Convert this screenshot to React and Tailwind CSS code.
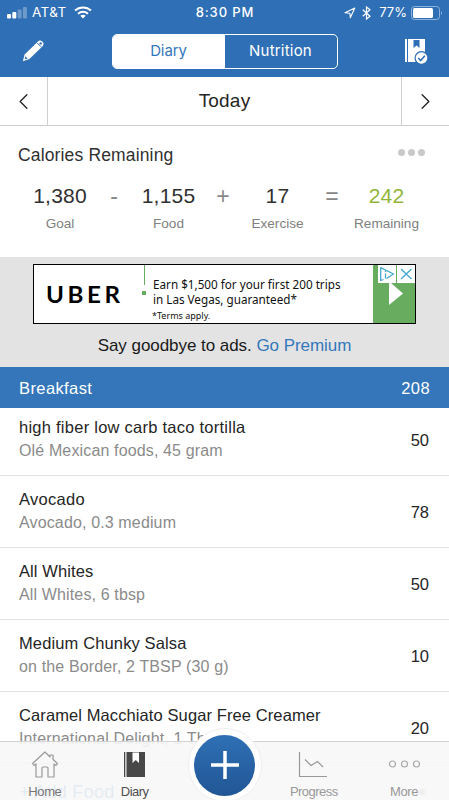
import { ChevronLeft, ChevronRight } from 'lucide-react';

const summary = [
  { value: '1,380', label: 'Goal', width: 'w-[76px]', color: 'text-[#303030]' },
  { sign: '-', width: 'w-[32px]' },
  { value: '1,155', label: 'Food', width: 'w-[77px]', color: 'text-[#303030]' },
  { sign: '+', width: 'w-[32px]' },
  { value: '17', label: 'Exercise', width: 'w-[77px]', color: 'text-[#303030]' },
  { sign: '=', width: 'w-[32px]' },
  { value: '242', label: 'Remaining', width: 'w-[77px]', color: 'text-[#8fb638]' },
];

const foods = [
  { name: 'high fiber low carb taco tortilla', detail: 'Olé Mexican foods, 45 gram', calories: 50, tracking: 'tracking-[0.25px]' },
  { name: 'Avocado', detail: 'Avocado, 0.3 medium', calories: 78, tracking: 'tracking-[0.3px]' },
  { name: 'All Whites', detail: 'All Whites, 6 tbsp', calories: 50, tracking: 'tracking-[0.1px]' },
  { name: 'Medium Chunky Salsa', detail: 'on the Border, 2 TBSP (30 g)', calories: 10, tracking: 'tracking-[0.13px]' },
  { name: 'Caramel Macchiato Sugar Free Creamer', detail: 'International Delight, 1 Tbsp', calories: 20, tracking: 'tracking-[0.1px]' },
];

const StatusBar = () => (
  <div className="flex h-[25px] items-center justify-between pl-[7px] pr-[6px] font-['Inter',sans-serif] text-[13px] leading-none text-white">
    <div className="flex w-[150px] items-center">
      <svg width="20" height="12" viewBox="0 0 20 12" fill="#fff">
        <rect x="0" y="7" width="4" height="4.5" rx="1" />
        <rect x="5.3" y="5" width="4" height="6.5" rx="1" />
        <rect x="10.6" y="2.5" width="4" height="9" rx="1" opacity=".3" />
        <rect x="15.9" y="0" width="4" height="11.5" rx="1" opacity=".3" />
      </svg>
      <span className="ml-[5px] text-[13.5px] tracking-[0.4px]">AT&amp;T</span>
      <svg className="ml-[7px]" width="18" height="13" viewBox="0 0 18 13" fill="none" stroke="#fff" strokeWidth="2">
        <path d="M1 4.6C5.5.4 12.5.4 17 4.6" />
        <path d="M4 7.7C6.8 5.2 11.2 5.2 14 7.7" />
        <path d="M6.3 9.7C7.8 8.3 10.2 8.3 11.7 9.7L9 12.4z" fill="#fff" stroke="none" />
      </svg>
    </div>
    <span className="font-medium tracking-[0.9px]">8:30 PM</span>
    <div className="flex w-[150px] items-center justify-end">
      <svg width="12" height="12" viewBox="0 0 12 12" fill="none" stroke="#fff" strokeWidth="1.1" strokeLinejoin="round">
        <path d="M1 5.8L10.8 1L6.3 10.8L5.9 6.2z" />
      </svg>
      <svg className="ml-[6px]" width="9" height="14" viewBox="0 0 9 14" fill="none" stroke="#fff" strokeWidth="1.2">
        <path d="M.8 3.8L8 10.2L4.5 13V1L8 3.8L.8 10.2" />
      </svg>
      <span className="ml-[8px] text-[13px]">77%</span>
      <svg className="ml-[4px]" width="32" height="14" viewBox="0 0 32 14">
        <rect x=".5" y=".5" width="28" height="13" rx="3" fill="none" stroke="#8fb4dc" />
        <rect x="2" y="2" width="20" height="10" rx="1.5" fill="#fff" />
        <path d="M30 5q2 2 0 4z" fill="#8fb4dc" />
      </svg>
    </div>
  </div>
);

const NavBar = () => (
  <div className="flex h-[52px] items-center justify-between pl-[22px] pr-[20px]">
    <svg className="-mt-[2px]" width="23" height="23" viewBox="0 0 23 23" fill="#fff">
      <path d="M2.6 15.5L16 2.4Q18 .6 20.2 2.6T20.8 7L7.4 20L.9 22.2z" />
      <path d="M15.3 4l3.8 3.8" stroke="#2f6fb5" strokeWidth="1" />
      <circle cx="18.7" cy="4.4" r="1.2" fill="#2f6fb5" />
      <path d="M3.4 17.3l2.2 2.1l-2.8 1z" fill="#2f6fb5" />
    </svg>
    <div className="flex h-[35px] w-[226px] overflow-hidden rounded-[5px] border border-white font-['Inter',sans-serif] text-[15px]">
      <div className="flex flex-1 items-center justify-center bg-white tracking-[-0.1px] text-[#3478bc]">Diary</div>
      <div className="flex flex-1 items-center justify-center tracking-[0.2px] text-white">Nutrition</div>
    </div>
    <svg width="25" height="27" viewBox="0 0 25 27">
      <path d="M1 1h2v23H1zM4 1h17v23H4z" fill="#fff" />
      <path d="M9.5 2h6v8l-3-2.5l-3 2.5z" fill="#2f6fb5" />
      <circle cx="17.5" cy="20" r="7" fill="#2f6fb5" />
      <circle cx="17.5" cy="20" r="5.8" fill="#fff" />
      <path d="M14.3 20l2.3 2.5l4.3-4.7" fill="none" stroke="#2f6fb5" strokeWidth="1.6" />
    </svg>
  </div>
);

const AdBanner = () => (
  <section className="h-[110px] bg-[#e3e3e3] pt-[7px]">
    <div className="mx-auto flex h-[60px] w-[383px] border border-black bg-white">
      <div className="flex w-[110px] items-center pl-[12px] font-['Lato',sans-serif] text-[22px] font-bold text-black">
        <span className="origin-left scale-x-110 tracking-[3.2px]">UBER</span>
      </div>
      <div className="w-[9px]">
        <div className="h-[20px] border-l border-[#68ac60]" />
        <div className="-ml-[2px] mt-[6px] size-[4px] bg-[#68ac60]" />
      </div>
      <div className="flex-1 whitespace-nowrap pt-[12px] font-['Noto_Sans',sans-serif] text-[11.7px] leading-[14.5px] text-[#111]">
        <p>Earn $1,500 for your first 200 trips</p>
        <p>in Las Vegas, guaranteed*</p>
        <p className="-ml-[1px] mt-[3px] text-[9px]">*Terms apply.</p>
      </div>
      <div className="w-[42px] bg-[#68ac60]">
        <div className="ml-[5px] flex gap-px">
          <svg className="bg-white" width="18" height="18" viewBox="0 0 18 18" fill="none" stroke="#45a9cf" strokeWidth="1.3" strokeLinejoin="round">
            <path d="M5.5 14.5L2.7 15.5V2.7L15.5 9L8.5 13.5" />
            <path d="M7.5 5.8v1.3M7.5 8.5v5" />
          </svg>
          <svg className="bg-white" width="18" height="18" viewBox="0 0 18 18" stroke="#45a9cf" strokeWidth="1.4">
            <path d="M4 4l10.5 10M14.5 4L4 14" />
          </svg>
        </div>
        <svg className="ml-[15px]" width="16" height="22" viewBox="0 0 16 22" fill="#fff">
          <path d="M1 0h2l12 10.5L1 22z" />
        </svg>
      </div>
    </div>
    <p className="mt-[12px] text-center text-[17px] leading-[20px] tracking-[-0.05px] text-[#1a1a1a]">
      Say goodbye to ads. <span className="text-[#3478bc]">Go Premium</span>
    </p>
  </section>
);

const TabBar = () => (
  <nav className="absolute inset-x-0 bottom-0 h-[59px] border-t border-[#d3d3d3] bg-[#f7f7f7]/90 text-[13px] leading-[16px] text-[#999]">
    <div className="grid h-full grid-cols-5">
      <div className="flex flex-col items-center pt-[9px] text-[#777]">
        <svg width="28" height="27" viewBox="0 0 28 27" fill="none" stroke="#999" strokeWidth="1.2" strokeLinejoin="round">
          <path d="M14 1L1.5 12.5L3 14.5L5 13V26H11V17Q11 16 12 16H16Q17 16 17 17V26H23V13L25 14.5L26.5 12.5L22 8.5V4H19V6z" />
        </svg>
        <span className="mt-[6px] tracking-[-0.4px]">Home</span>
      </div>
      <div className="flex flex-col items-center pt-[9px] text-[#505050]">
        <svg width="23" height="27" viewBox="0 0 23 27">
          <path d="M1 1h1.3v25H1zM3.5 1H22v25H3.500z" fill="#484848" />
          <path d="M9.5 1.5h6.5V12l-3.200-3L9.500 12z" fill="#fff" />
        </svg>
        <span className="mt-[6px] tracking-[-0.5px]">Diary</span>
      </div>
      <div />
      <div className="flex flex-col items-center pt-[9px]">
        <svg className="-ml-[3px]" width="30" height="27" viewBox="0 0 30 27" fill="none" stroke="#999" strokeWidth="1.2">
          <path d="M1.5 1V25.5H29M7 8.500L13 14.500L19.500 10.500L25 16" />
        </svg>
        <span className="-ml-px mt-[6px] tracking-[-0.55px]">Progress</span>
      </div>
      <div className="flex flex-col items-center pt-[9px]">
        <svg width="33" height="27" viewBox="0 0 33 27" fill="none" stroke="#aaa" strokeWidth="1.2">
          <circle cx="4.5" cy="13" r="3" />
          <circle cx="16.5" cy="13" r="3" />
          <circle cx="28.5" cy="13" r="3" />
        </svg>
        <span className="mt-[6px] tracking-[-0.3px]">More</span>
      </div>
    </div>
    {/* Quick add button, sits above the bar */}
    <div className="absolute left-1/2 -top-[14px] flex size-[74px] -translate-x-1/2 items-center justify-center rounded-full border border-[#eee] bg-white">
      <div className="flex size-[61px] items-center justify-center rounded-full bg-linear-to-b from-[#2f70b5] to-[#215695]">
        <svg width="30" height="30" viewBox="0 0 30 30" stroke="#fff" strokeWidth="3.5">
          <path d="M15 1v28M1 15h28" />
        </svg>
      </div>
    </div>
  </nav>
);

const App = () => (
  <div className="relative h-[800px] w-[449px] overflow-hidden bg-white font-['Liberation_Sans',Arial,sans-serif] text-[#252525]">
    <header className="h-[77px] bg-[#2f6fb5]">
      <StatusBar />
      <NavBar />
    </header>

    <div className="flex h-[49px] border-b border-[#cfcfcf]">
      <div className="flex w-[48px] items-center justify-center border-r border-[#cfcfcf]">
        <ChevronLeft size={27} strokeWidth={1.2} />
      </div>
      <div className="flex flex-1 items-center justify-center text-[19px] tracking-[0.2px]">Today</div>
      <div className="flex w-[48px] items-center justify-center border-l border-[#cfcfcf]">
        <ChevronRight size={27} strokeWidth={1.2} />
      </div>
    </div>

    <section className="h-[131px] pt-[19px]">
      <div className="flex justify-between pl-[18px] pr-[24px]">
        <h2 className="text-[17.5px] leading-[20px] tracking-[0.15px] text-[#303030]">Calories Remaining</h2>
        <div className="flex gap-[3px] pt-[4px]">
          <span className="size-[7px] rounded-full bg-[#c9c9c9]" />
          <span className="size-[7px] rounded-full bg-[#c9c9c9]" />
          <span className="size-[7px] rounded-full bg-[#c9c9c9]" />
        </div>
      </div>
      <div className="mt-[18px] flex pl-[22px] text-center">
        {summary.map((item, i) => (
          <div key={i} className={item.width}>
            {item.sign ? (
              <p className="text-[23px] leading-[27px] text-[#888]">{item.sign}</p>
            ) : (
              <>
                <p className={`text-[21px] leading-[26px] tracking-[0.2px] ${item.color}`}>{item.value}</p>
                <p className="mt-[7px] text-[13.6px] leading-[16px] text-[#808080]">{item.label}</p>
              </>
            )}
          </div>
        ))}
      </div>
    </section>

    <AdBanner />

    <div className="flex h-[41px] items-center justify-between bg-[#3476b9] pl-[19px] pr-[19px] pt-px text-[16.5px] tracking-[0.4px] text-white">
      <span>Breakfast</span>
      <span>208</span>
    </div>

    <ul className="-mt-[4px]">
      {foods.map((food) => (
        <li key={food.name} className="flex h-[72px] items-center justify-between border-b border-[#e2e2e2] pl-[19px] pr-[20px]">
          <div className="whitespace-nowrap">
            <p className={`text-[16.5px] leading-[23px] ${food.tracking}`}>{food.name}</p>
            <p className="text-[16px] leading-[24px] tracking-[0.14px] text-[#8b8b8b]">{food.detail}</p>
          </div>
          <span className="pt-[1px] text-[16.5px]">{food.calories}</span>
        </li>
      ))}
    </ul>
    <div className="flex items-center justify-between pl-[19px] pr-[24px] pt-[20px] text-[18px] leading-[16px] tracking-[0.3px] text-[#3478bc]">
      <span>+ Add Food</span>
      <span className="size-[6px] rounded-full bg-[#999]" />
    </div>

    <TabBar />
  </div>
);

export default App;
